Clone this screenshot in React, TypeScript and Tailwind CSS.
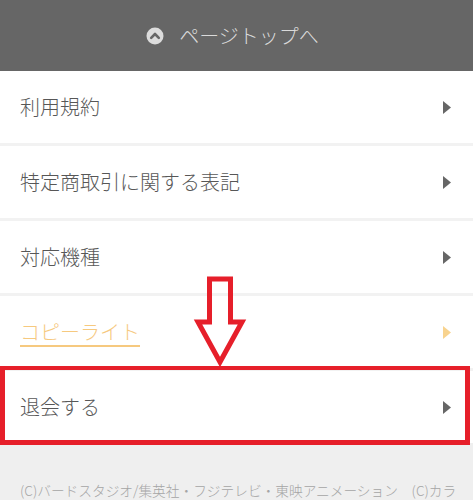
import React from "react";

const font = { fontFamily: '"Noto Sans CJK JP", "Noto Sans", sans-serif' };

function Tri({ color }: { color: string }) {
  return (
    <svg width="8" height="13" viewBox="0 0 8 13" className="shrink-0">
      <polygon points="0,0 8,6.5 0,13" fill={color} />
    </svg>
  );
}

function Row({ label, link }: { label: string; link?: boolean }) {
  return (
    <div className="flex h-[72px] items-center justify-between bg-white pl-5 pr-[22px]">
      <span
        className={
          link
            ? "text-[20px] font-light leading-none text-[#f6c97f] underline decoration-[1.5px] underline-offset-[5px]"
            : "text-[20px] font-light leading-none text-[#575757]"
        }
      >
        {label}
      </span>
      <Tri color={link ? "#f8d38e" : "#666666"} />
    </div>
  );
}

export default function App() {
  return (
    <div className="relative h-[500px] w-[473px] overflow-hidden bg-[#efefef]" style={font}>
      <div className="flex h-[71px] items-center justify-center gap-[15px] bg-[#666666] pr-[8px]">
        <svg width="18" height="18" viewBox="0 0 18 18">
          <circle cx="9" cy="9" r="8.5" fill="#dcdcdc" />
          <polyline
            points="5.2,10.8 9,7 12.8,10.8"
            fill="none"
            stroke="#666666"
            strokeWidth="2.6"
            strokeLinecap="round"
            strokeLinejoin="round"
          />
        </svg>
        <span className="text-[20px] font-light leading-none text-[#dadada]">ページトップへ</span>
      </div>
      <div className="flex flex-col gap-[3px] bg-[#f2f2f2]">
        <Row label="利用規約" />
        <Row label="特定商取引に関する表記" />
        <Row label="対応機種" />
        <Row label="コピーライト" link />
        <Row label="退会する" />
      </div>
      <div className="whitespace-nowrap bg-[#efefef] px-5 pt-[38px] text-[13.7px] font-light leading-[18px] text-[#a5a5a5]">
        (C)バードスタジオ/集英社・フジテレビ・東映アニメーション　(C)カラ
      </div>

      <div className="absolute left-0 top-[366px] h-[79px] w-[470px] border-[5px] border-t-4 border-[#e61f2a]" />
      <svg className="absolute left-0 top-0" width="473" height="500" viewBox="0 0 473 500">
        <polygon
          points="209.5,279 230.5,279 230.5,322 242,322 220,362 198,322 209.5,322"
          fill="none"
          stroke="#e61f2a"
          strokeWidth="5"
          strokeLinejoin="miter"
        />
      </svg>
    </div>
  );
}
